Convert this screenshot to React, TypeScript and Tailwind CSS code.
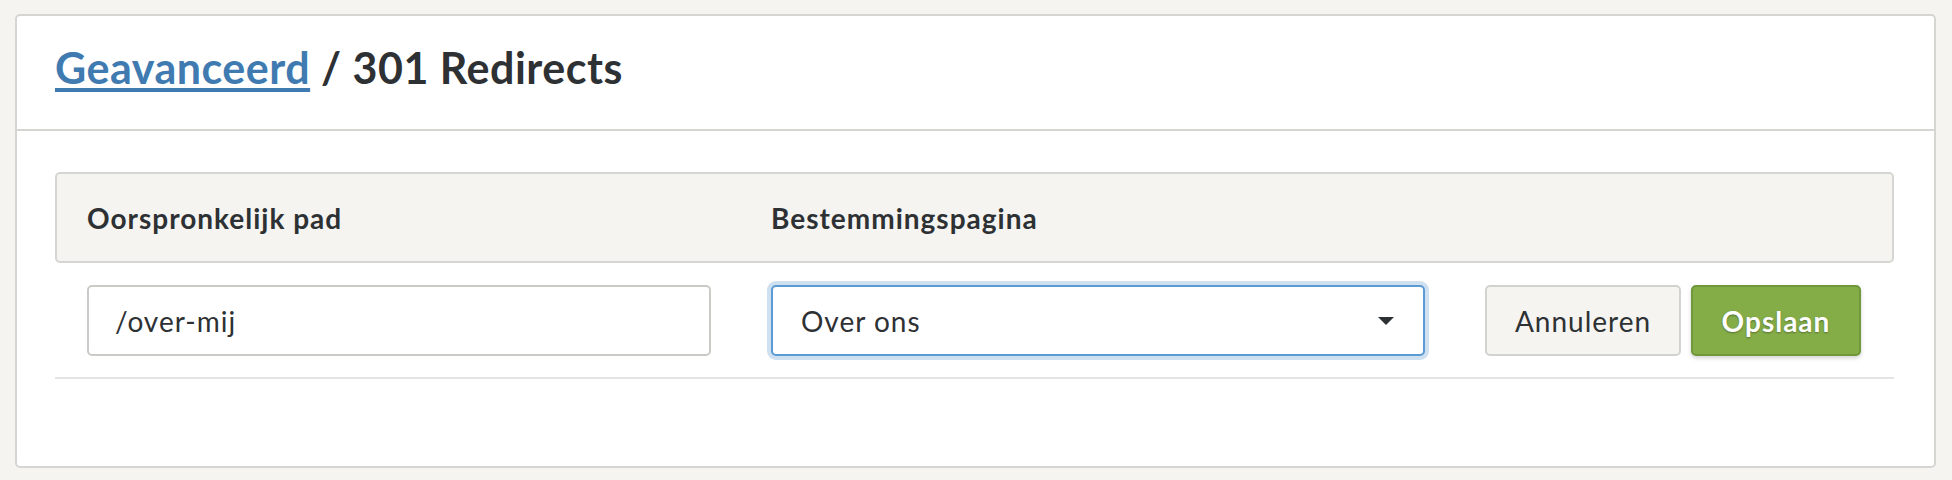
const font = { fontFamily: 'Lato, "Open Sans", sans-serif' };

function CaretDown() {
  return (
    <svg width="16" height="8" viewBox="0 0 16 8" aria-hidden="true">
      <path d="M0 0h16L8 8z" fill="#2e3134" />
    </svg>
  );
}

export default function App() {
  return (
    <div
      className="min-h-screen bg-[#f5f4f0] pt-[14px] pr-[16px] pb-4 pl-[15px] text-[#2e3134]"
      style={font}
    >
      <div className="rounded-[5px] border-2 border-[#d5d5d1] bg-white">
        <div className="flex h-[115px] items-center border-b-2 border-[#d5d5d1] px-[38px] pb-[8px]">
          <h1 className="text-[43px] font-bold tracking-[0.5px]">
            <a
              href="#"
              className="text-[#3f7bb0] underline decoration-[4px] underline-offset-[4px]"
            >
              Geavanceerd
            </a>{' '}
            / 301 Redirects
          </h1>
        </div>

        <div className="pt-[41px] pr-[40px] pb-[87px] pl-[38px]">
          <div className="grid h-[91px] grid-cols-[684px_714px_1fr] items-center rounded-[5px] border-2 border-[#d5d5d1] bg-[#f5f4f0] text-[28px] font-bold tracking-[1px]">
            <div className="px-[30px]">Oorspronkelijk pad</div>
            <div className="px-[30px]">Bestemmingspagina</div>
            <div />
          </div>

          <div className="grid grid-cols-[684px_714px_1fr] items-center border-b-2 border-[#e4e4e2] px-[2px] pt-[22px] pb-[21px] text-[28px] tracking-[1px]">
            <div className="px-[30px]">
              <input
                defaultValue="/over-mij"
                className="h-[71px] w-full rounded-[5px] border-2 border-[#cacac7] bg-white px-[26px] text-[#2e3134] outline-none"
              />
            </div>
            <div className="px-[30px]">
              <div className="flex h-[71px] w-full items-center justify-between rounded-[5px] border-2 border-[#5a9bd3] bg-white pr-[29px] pl-[28px] shadow-[0_0_0_4px_#cfe1f1]">
                <span>Over ons</span>
                <CaretDown />
              </div>
            </div>
            <div className="flex gap-[10px] pl-[30px]">
              <button className="h-[71px] w-[196px] rounded-[5px] border-2 border-[#d2d2ce] bg-[#f5f4f0] text-[#2e3134]">
                Annuleren
              </button>
              <button className="h-[71px] w-[170px] rounded-[5px] border-2 border-[#6f983c] bg-[#84ad48] font-bold text-white shadow-[0_2px_4px_rgba(0,0,0,0.18)] [text-shadow:0_1px_2px_rgba(0,0,0,0.35)]">
                Opslaan
              </button>
            </div>
          </div>
        </div>
      </div>
    </div>
  );
}
